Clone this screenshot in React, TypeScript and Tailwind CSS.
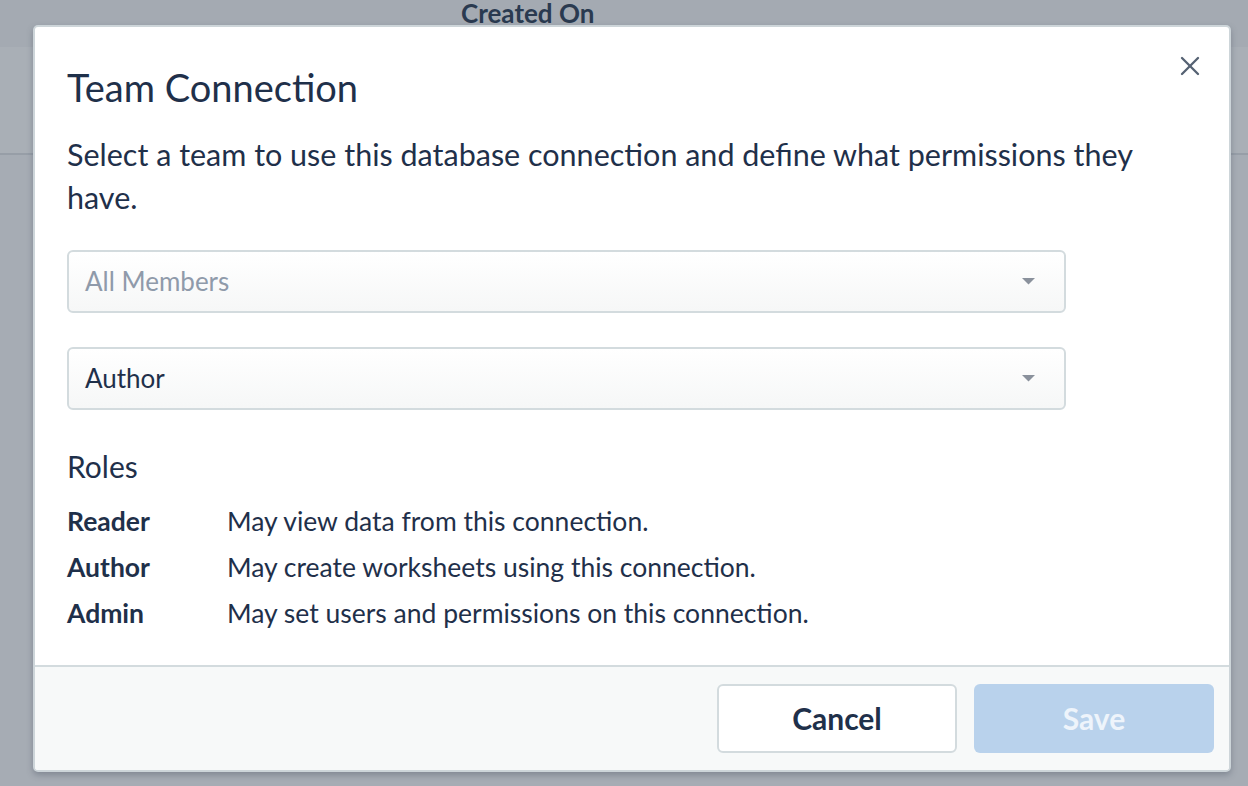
import { X } from 'lucide-react';

function Caret() {
  return (
    <svg width="13" height="7" viewBox="0 0 13 7" className="shrink-0">
      <path d="M0 0h13L6.5 6.5z" fill="#8a919c" />
    </svg>
  );
}

function SelectBox({ value, placeholder }: { value: string; placeholder?: boolean }) {
  return (
    <div className="flex h-[63px] w-[999px] items-center justify-between rounded-[6px] border-2 border-[#d3dbde] bg-gradient-to-b from-white to-[#f6f7f7] pl-[16px] pr-[29px]">
      <span className={placeholder ? 'text-[#8f9aaa]' : 'text-[#1f304a]'}>{value}</span>
      <Caret />
    </div>
  );
}

const roles = [
  { name: 'Reader', desc: 'May view data from this connection.' },
  { name: 'Author', desc: 'May create worksheets using this connection.' },
  { name: 'Admin', desc: 'May set users and permissions on this connection.' },
];

export default function App() {
  return (
    <div className="relative h-[786px] w-[1248px] overflow-hidden bg-[#a6acb4] font-['Lato',sans-serif] text-[#1f304a]">
      {/* page behind the overlay */}
      <div className="h-[47px] bg-[#a4aab2] pl-[461px]">
        <span className="block text-[26px] leading-[26px] font-bold text-[#2a3a50]">Created On</span>
      </div>
      <div className="h-[108px] border-b-2 border-[#979ea7] bg-[#a9afb6]" />

      {/* modal */}
      <div className="absolute left-[33px] top-[25px] flex w-[1198px] flex-col overflow-hidden rounded-[5px] border-2 border-[#cdd5d9] bg-white shadow-[0_3px_6px_rgba(60,70,85,0.35)]">
        <div className="relative px-[32px] pt-[36px] pb-[34px]">
          <button className="absolute right-[23px] top-[23px] text-[#556273]">
            <X size={32} strokeWidth={1.75} />
          </button>
          <h2 className="text-[38px] leading-[48px]">Team Connection</h2>
          <p className="mt-[22px] pr-[60px] text-[30.5px] leading-[43px]">
            Select a team to use this database connection and define what permissions they have.
          </p>
          <div className="mt-[31px] flex flex-col gap-[34px] text-[26px]">
            <SelectBox value="All Members" placeholder />
            <SelectBox value="Author" />
          </div>
          <h3 className="mt-[38px] text-[30px] leading-[36px]">Roles</h3>
          <div className="mt-[19px] flex flex-col gap-[10px] text-[26.5px] leading-[36px]">
            {roles.map((r) => (
              <div key={r.name} className="flex">
                <span className="w-[160px] font-bold">{r.name}</span>
                <span>{r.desc}</span>
              </div>
            ))}
          </div>
        </div>
        <div className="flex justify-end gap-[17px] border-t-2 border-[#d3dbde] bg-[#f7f9f9] px-[15px] pt-[17px] pb-[17px]">
          <button className="h-[69px] w-[240px] rounded-[6px] border-2 border-[#d3dbde] bg-white text-[30px] font-bold text-[#1f304a]">
            Cancel
          </button>
          <button className="h-[69px] w-[240px] rounded-[6px] bg-[#b9d2ec] text-[30px] font-bold text-[#eef4fb]">
            Save
          </button>
        </div>
      </div>
    </div>
  );
}
